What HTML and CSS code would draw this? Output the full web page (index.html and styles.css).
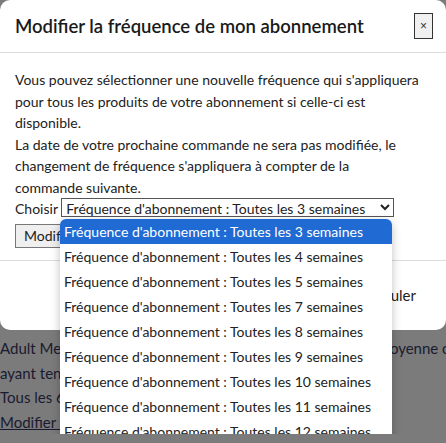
FILE: index.html
```html
<!DOCTYPE html>
<html lang="fr">
<head>
    <meta charset="UTF-8">
    <meta name="viewport" content="width=device-width, initial-scale=1.0">
    <title>Modifier la fréquence de mon abonnement</title>
    <link rel="stylesheet" href="styles.css">
</head>
<body>
    <div class="modal-content">
        <div class="modal-header">
            <h3>Modifier la fréquence de mon abonnement</h3>
            <button class="close">&times;</button>
        </div>
        <div class="modal-body">
            <p>Vous pouvez sélectionner une nouvelle fréquence qui s'appliquera pour tous les produits de votre abonnement si celle-ci est disponible.<br>
            La date de votre prochaine commande ne sera pas modifiée, le changement de fréquence s'appliquera à compter de la<br>
            commande suivante.<br>
            Choisir <select id="frequence">
                <option>Fréquence d'abonnement : Toutes les 3 semaines</option>
            </select></p>
            <button class="btn">Modifier la fréquence</button>
            <ul class="dropdown">
                <li class="selected">Fréquence d'abonnement : Toutes les 3 semaines</li>
                <li>Fréquence d'abonnement : Toutes les 4 semaines</li>
                <li>Fréquence d'abonnement : Toutes les 5 semaines</li>
                <li>Fréquence d'abonnement : Toutes les 7 semaines</li>
                <li>Fréquence d'abonnement : Toutes les 8 semaines</li>
                <li>Fréquence d'abonnement : Toutes les 9 semaines</li>
                <li>Fréquence d'abonnement : Toutes les 10 semaines</li>
                <li>Fréquence d'abonnement : Toutes les 11 semaines</li>
                <li>Fréquence d'abonnement : Toutes les 12 semaines</li>
            </ul>
        </div>
        <div class="modal-footer">
            <button class="btn-link">Annuler</button>
        </div>
    </div>

    <div class="page">
        <p>Adult Medium Chicken &amp; Rice, pour chien adulte de taille moyenne ou</p>
        <p>ayant tendance à prendre du poids</p>
        <p>Tous les 6 semaines</p>
        <p><a href="#">Modifier la fréquence</a></p>
    </div>
</body>
</html>
```

FILE: styles.css
```css
body {
    margin: 0;
    background-color: #7b7b7b;
    font-family: Lato, "Open Sans", sans-serif;
    font-size: 14px;
    color: #222;
    overflow: hidden;
}
.modal-content {
    position: relative;
    background-color: white;
    border-radius: 10px;
    height: 330px;
}
.modal-header {
    display: flex;
    justify-content: space-between;
    align-items: center;
    height: 52px;
    padding: 0 13px 0 15px;
    border-bottom: 1px solid #dcdcdc;
}
.modal-header h3 {
    margin: 0;
    font-size: 18.5px;
    font-weight: 600;
    color: #1a1a1a;
}
.close {
    width: 19px;
    height: 26px;
    padding: 0;
    border: 1px solid #333;
    background-color: #f0f0f0;
    font-size: 12px;
    line-height: 1;
    color: #333;
}
.modal-body {
    position: relative;
    padding: 16px 15px 12px 15px;
    border-bottom: 1px solid #dcdcdc;
}
.modal-body p {
    margin: 0;
    line-height: 21.5px;
}
select {
    font-family: inherit;
    font-size: 14px;
    height: 19px;
    width: 333px;
    padding: 0;
    border: 1px solid #555;
    border-radius: 0;
    background-color: white;
    color: #222;
}
.btn {
    margin-top: 4px;
    height: 24px;
    padding: 0 8px;
    font-family: inherit;
    font-size: 14px;
    border: 1px solid #777;
    background-color: #efefef;
    color: #222;
}
.dropdown {
    position: absolute;
    left: 60px;
    top: 166px;
    width: 332px;
    margin: 0;
    padding: 0;
    list-style: none;
    font-size: 14px;
    background-color: white;
    border-radius: 6px;
    box-shadow: 0 3px 10px rgba(0, 0, 0, 0.25);
    z-index: 2;
    overflow: hidden;
}
.dropdown li {
    height: 25px;
    line-height: 25px;
    padding-left: 4px;
    white-space: nowrap;
}
.dropdown li.selected {
    background-color: #1f6ad3;
    color: white;
}
.modal-footer {
    display: flex;
    justify-content: flex-end;
    align-items: center;
    height: 68px;
    padding: 0 24px;
}
.btn-link {
    border: none;
    background: none;
    font-family: inherit;
    font-size: 15px;
    color: #222;
}
.page {
    padding: 6px 0 0 0;
}
.page p {
    margin: 0;
    line-height: 24.5px;
    font-size: 15px;
    color: #1a1a30;
    white-space: nowrap;
}
.page a {
    color: #1a1a30;
}
```
